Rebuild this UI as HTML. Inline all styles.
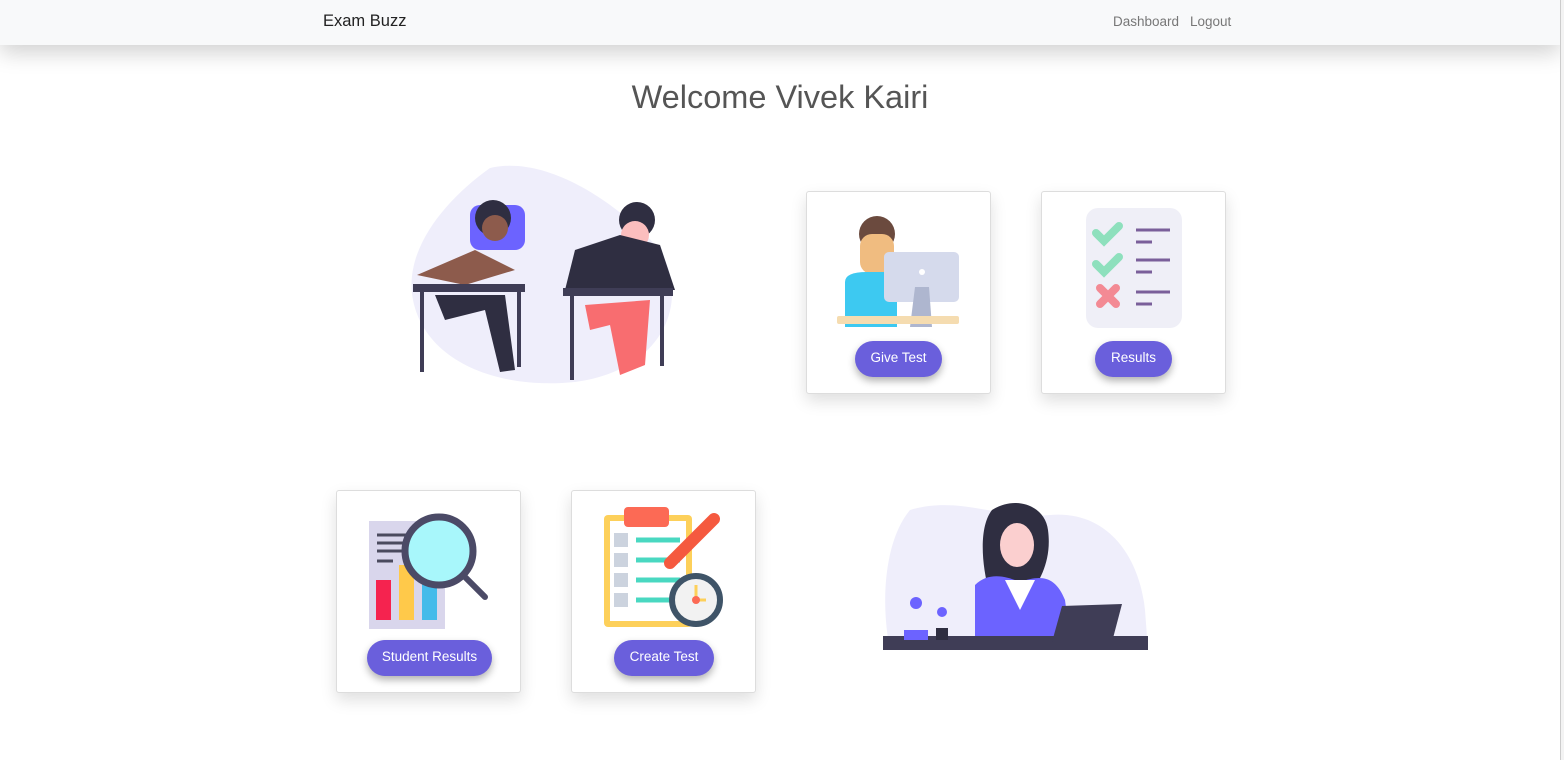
<!DOCTYPE html>
<html><head><meta charset="utf-8"><style>
*{margin:0;padding:0;box-sizing:border-box}
body{width:1564px;height:760px;background:#fff;font-family:"Liberation Sans",sans-serif;position:relative;overflow:hidden}
.nav{position:absolute;left:0;top:0;width:1560px;height:45px;background:#f8f9fa;box-shadow:0 8px 22px rgba(0,0,0,.18)}
.brand{position:absolute;left:323px;top:12px;font-size:16.5px;color:#222}
.nl{position:absolute;top:14px;font-size:13.5px;color:#777}
.sb{position:absolute;left:1560px;top:0;width:4px;height:760px;background:#f3f3f3;border-left:1px solid #ccc}
h1{position:absolute;left:0;width:1560px;top:79px;text-align:center;font-weight:400;font-size:32.5px;color:#555}
.card{position:absolute;width:185px;height:203px;background:#fff;border:1px solid #ddd;border-radius:3px;box-shadow:0 7px 16px rgba(0,0,0,.13)}
.btn{position:absolute;height:36px;border-radius:18px;background:#6a5fdc;color:#fff;font-size:13.5px;line-height:34px;text-align:center;box-shadow:0 4px 8px rgba(0,0,0,.3);top:149px}
svg{position:absolute}
</style></head><body>
<div class="nav"><div class="brand">Exam Buzz</div><div class="nl" style="left:1113px">Dashboard</div><div class="nl" style="left:1190px">Logout</div></div>
<div class="sb"></div>
<h1>Welcome Vivek Kairi</h1>

<svg style="left:405px;top:160px" width="280" height="230" viewBox="0 0 280 230">
<path d="M85 8 C140 -5 210 40 255 90 C285 140 260 210 170 222 C90 230 20 200 8 140 C-2 90 40 40 85 8Z" fill="#efeefb"/>
<rect x="65" y="45" width="55" height="45" rx="10" fill="#6c63ff"/>
<circle cx="88" cy="58" r="18" fill="#2f2e41"/><circle cx="90" cy="68" r="13" fill="#8d5b4c"/>
<path d="M12 115 L70 90 L110 110 L60 125Z" fill="#8d5b4c"/>
<rect x="8" y="124" width="112" height="8" fill="#3f3d56"/>
<path d="M30 135 L100 135 L110 210 L95 212 L80 150 L40 160Z" fill="#2f2e41"/>
<rect x="15" y="132" width="4" height="80" fill="#3f3d56"/><rect x="112" y="132" width="4" height="75" fill="#3f3d56"/>
<circle cx="232" cy="60" r="18" fill="#2f2e41"/><circle cx="230" cy="75" r="14" fill="#fbbebe"/>
<path d="M170 90 L215 75 L255 85 L270 130 L160 130Z" fill="#2f2e41"/>
<rect x="158" y="128" width="110" height="8" fill="#3f3d56"/>
<path d="M180 145 L245 140 L240 205 L215 215 L205 165 L185 170Z" fill="#f86d70"/>
<rect x="165" y="136" width="4" height="84" fill="#3f3d56"/><rect x="255" y="136" width="4" height="70" fill="#3f3d56"/>
</svg>

<div class="card" style="left:806px;top:191px">
<svg style="left:30px;top:20px" width="125" height="115" viewBox="0 0 125 115">
<circle cx="40" cy="22" r="18" fill="#6b4a3e"/><rect x="23" y="22" width="34" height="40" rx="12" fill="#f0bc80"/>
<path d="M8 70 Q8 60 30 60 L60 60 L60 115 L8 115Z" fill="#3dc9f1"/>
<rect x="47" y="40" width="75" height="50" rx="5" fill="#d5daec"/><circle cx="85" cy="60" r="3" fill="#fff"/>
<path d="M78 75 L92 75 L95 115 L73 115Z" fill="#aeb6cf"/>
<rect x="0" y="104" width="122" height="8" rx="2" fill="#f5dcb0"/>
</svg><div class="btn" style="left:48px;width:87px">Give Test</div></div>

<div class="card" style="left:1041px;top:191px">
<svg style="left:32px;top:16px" width="122" height="122" viewBox="0 0 122 122">
<rect x="12" y="0" width="96" height="120" rx="12" fill="#efeff7"/>
<path d="M22 25 L30 33 L45 18" stroke="#8ee0bd" stroke-width="8" fill="none" stroke-linecap="round"/>
<path d="M22 56 L30 64 L45 49" stroke="#8ee0bd" stroke-width="8" fill="none" stroke-linecap="round"/>
<path d="M26 80 L42 96 M42 80 L26 96" stroke="#f38a94" stroke-width="8" stroke-linecap="round"/>
<g stroke="#7a5f9a" stroke-width="3"><path d="M62 22H96M62 34H78M62 52H96M62 64H78M62 84H96M62 96H78"/></g>
</svg><div class="btn" style="left:53px;width:77px">Results</div></div>

<div class="card" style="left:336px;top:490px">
<svg style="left:30px;top:14px" width="130" height="125" viewBox="0 0 130 125">
<rect x="2" y="16" width="76" height="108" fill="#d9d6ec"/>
<g stroke="#4a4a5e" stroke-width="3"><path d="M10 30H40M10 38H40M10 46H40M10 56H26"/></g>
<rect x="9" y="75" width="15" height="40" fill="#f5234f"/><rect x="32" y="60" width="15" height="55" fill="#ffc94a"/><rect x="55" y="72" width="15" height="43" fill="#44bbea"/>
<circle cx="72" cy="46" r="34" fill="#a8f7fb" stroke="#4b4a66" stroke-width="7"/>
<path d="M96 70 L118 92" stroke="#4b4a66" stroke-width="6" stroke-linecap="round"/>
</svg><div class="btn" style="left:30px;width:125px">Student Results</div></div>

<div class="card" style="left:571px;top:490px">
<svg style="left:30px;top:14px" width="125" height="125" viewBox="0 0 125 125">
<rect x="2" y="10" width="88" height="112" rx="4" fill="#fdd05a"/><rect x="8" y="16" width="76" height="100" fill="#fff"/>
<rect x="22" y="2" width="45" height="20" rx="4" fill="#fc6a55"/>
<rect x="12" y="28" width="14" height="14" fill="#ccd3de"/><rect x="12" y="48" width="14" height="14" fill="#ccd3de"/><rect x="12" y="68" width="14" height="14" fill="#ccd3de"/><rect x="12" y="88" width="14" height="14" fill="#ccd3de"/>
<g stroke="#49d8c1" stroke-width="5"><path d="M34 35H78M34 55H78M34 75H78M34 95H78"/></g>
<path d="M68 58 L112 14" stroke="#f5593f" stroke-width="12" stroke-linecap="round"/>
<circle cx="94" cy="95" r="24" fill="#f2f2f2" stroke="#3f5468" stroke-width="6"/>
<path d="M94 80 V95 H104" stroke="#fdd05a" stroke-width="3" fill="none"/><circle cx="94" cy="95" r="4" fill="#fc6a55"/>
</svg><div class="btn" style="left:42px;width:100px">Create Test</div></div>

<svg style="left:880px;top:500px" width="275" height="155" viewBox="0 0 275 155">
<path d="M30 10 C80 -5 120 20 170 15 C230 10 260 60 265 110 L268 150 L10 150 C0 100 5 40 30 10Z" fill="#efeefb"/>
<path d="M112 10 C135 -5 165 5 168 30 C172 60 160 80 150 95 L110 95 C100 60 100 25 112 10Z" fill="#2f2e41"/>
<ellipse cx="137" cy="45" rx="17" ry="22" fill="#fbcfcf"/>
<path d="M95 85 C110 70 130 78 140 82 C160 75 175 75 185 100 L190 138 L95 140Z" fill="#6c63ff"/>
<path d="M125 80 L140 110 L155 80Z" fill="#fff"/>
<rect x="3" y="136" width="265" height="14" fill="#3f3d56"/>
<path d="M182 106 L242 104 L232 142 L172 142Z" fill="#3f3d56"/>
<circle cx="36" cy="103" r="6" fill="#6c63ff"/><rect x="24" y="130" width="24" height="10" fill="#6c63ff"/>
<circle cx="62" cy="112" r="5" fill="#6c63ff"/><rect x="56" y="128" width="12" height="12" fill="#2f2e41"/>
</svg>
</body></html>
